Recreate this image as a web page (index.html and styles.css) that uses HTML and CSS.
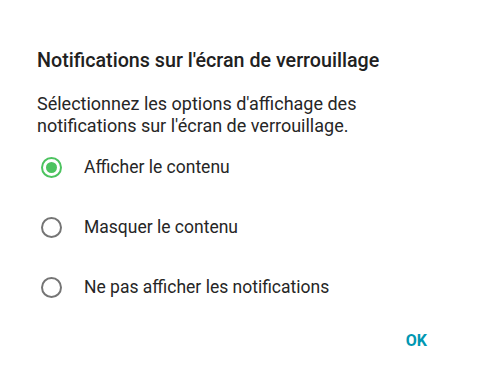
FILE: index.html
```html
<!DOCTYPE html>
<html lang="fr">
<head>
<meta charset="utf-8">
<link rel="stylesheet" href="styles.css">
</head>
<body>
<div class="dialog">
  <h1 class="title">Notifications sur l'écran de verrouillage</h1>
  <p class="message">Sélectionnez les options d'affichage des notifications sur l'écran de verrouillage.</p>
  <div class="options">
    <div class="option">
      <span class="radio checked"><span class="dot"></span></span>
      <span class="label">Afficher le contenu</span>
    </div>
    <div class="option">
      <span class="radio"></span>
      <span class="label">Masquer le contenu</span>
    </div>
    <div class="option">
      <span class="radio"></span>
      <span class="label">Ne pas afficher les notifications</span>
    </div>
  </div>
  <div class="actions">
    <span class="btn">OK</span>
  </div>
</div>
</body>
</html>
```
FILE: styles.css
```css
html, body {
  margin: 0;
  padding: 0;
  background: #ffffff;
}
body {
  width: 480px;
  height: 389px;
  overflow: hidden;
  font-family: Roboto, "Noto Sans", sans-serif;
}
.dialog {
  padding: 48px 0 0 37px;
}
.title {
  margin: 0;
  font-size: 19.7px;
  font-weight: 500;
  line-height: 26px;
  color: #212121;
}
.message {
  margin: 19px 0 0 0;
  font-size: 18px;
  line-height: 22px;
  color: #262626;
  width: 380px;
}
.options {
  display: flex;
  flex-direction: column;
}
.option {
  height: 60px;
  display: flex;
  align-items: center;
}
.radio {
  box-sizing: border-box;
  width: 21px;
  height: 21px;
  border: 2px solid #757575;
  border-radius: 50%;
  margin-left: 4px;
  display: flex;
  align-items: center;
  justify-content: center;
}
.radio.checked {
  border-color: #4cc35f;
}
.dot {
  width: 11px;
  height: 11px;
  border-radius: 50%;
  background: #4cc35f;
}
.label {
  margin-left: 22px;
  font-size: 17.5px;
  color: #262626;
}
.actions {
  display: flex;
  justify-content: flex-end;
  padding-right: 53px;
  margin-top: 14px;
}
.btn {
  font-size: 16px;
  line-height: 20px;
  font-weight: 700;
  color: #0097b2;
}
```
